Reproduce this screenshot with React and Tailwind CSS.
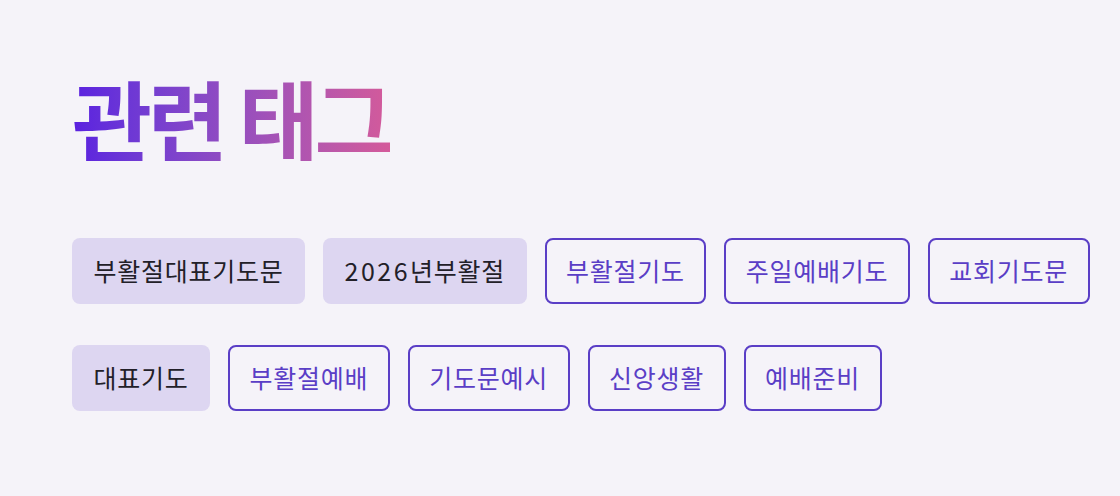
import React from 'react';

const tags = [
    { label: '부활절대표기도문', filled: true },
    { label: '2026년부활절', filled: true },
    { label: '부활절기도' },
    { label: '주일예배기도' },
    { label: '교회기도문' },
    { label: '대표기도', filled: true },
    { label: '부활절예배' },
    { label: '기도문예시' },
    { label: '신앙생활' },
    { label: '예배준비' },
];

// digits in the reference font run a bit wider
const renderLabel = (label) =>
    label.split(/(\d+)/).map((part, i) =>
        /^\d+$/.test(part)
            ? <span key={i} className="tracking-[0.1em]">{part}</span>
            : part
    );

const Tag = ({ label, filled }) => (
    <span
        className={
            filled
                ? 'inline-flex items-center h-[66px] px-[19.5px] rounded-lg bg-[#ddd6f1] text-[#222028] text-[25px] tracking-[0.03em] border-2 border-transparent'
                : 'inline-flex items-center h-[66px] px-[19.5px] rounded-lg border-2 border-[#5a3ec6] text-[#5a3ec6] text-[25px] tracking-[0.03em]'
        }
    >
        {renderLabel(label)}
    </span>
);

export default function App() {
    return (
        <div
            className="min-h-screen bg-[#f5f3f9] pl-[72px] pr-[8px] pt-[74px]"
            style={{ fontFamily: '"Noto Sans CJK KR", "Noto Sans", sans-serif' }}
        >
            <h2 className="text-[87px] font-bold leading-none tracking-[-0.05em] bg-gradient-to-r from-[#5a1fe0] to-[#d45a9a] bg-clip-text text-transparent w-fit">
                관련 태그
            </h2>

            {/* tag list */}
            <div className="mt-[77px] flex flex-wrap gap-x-[18px] gap-y-[41px]">
                {tags.map(t => (
                    <Tag key={t.label} {...t} />
                ))}
            </div>
        </div>
    );
}
